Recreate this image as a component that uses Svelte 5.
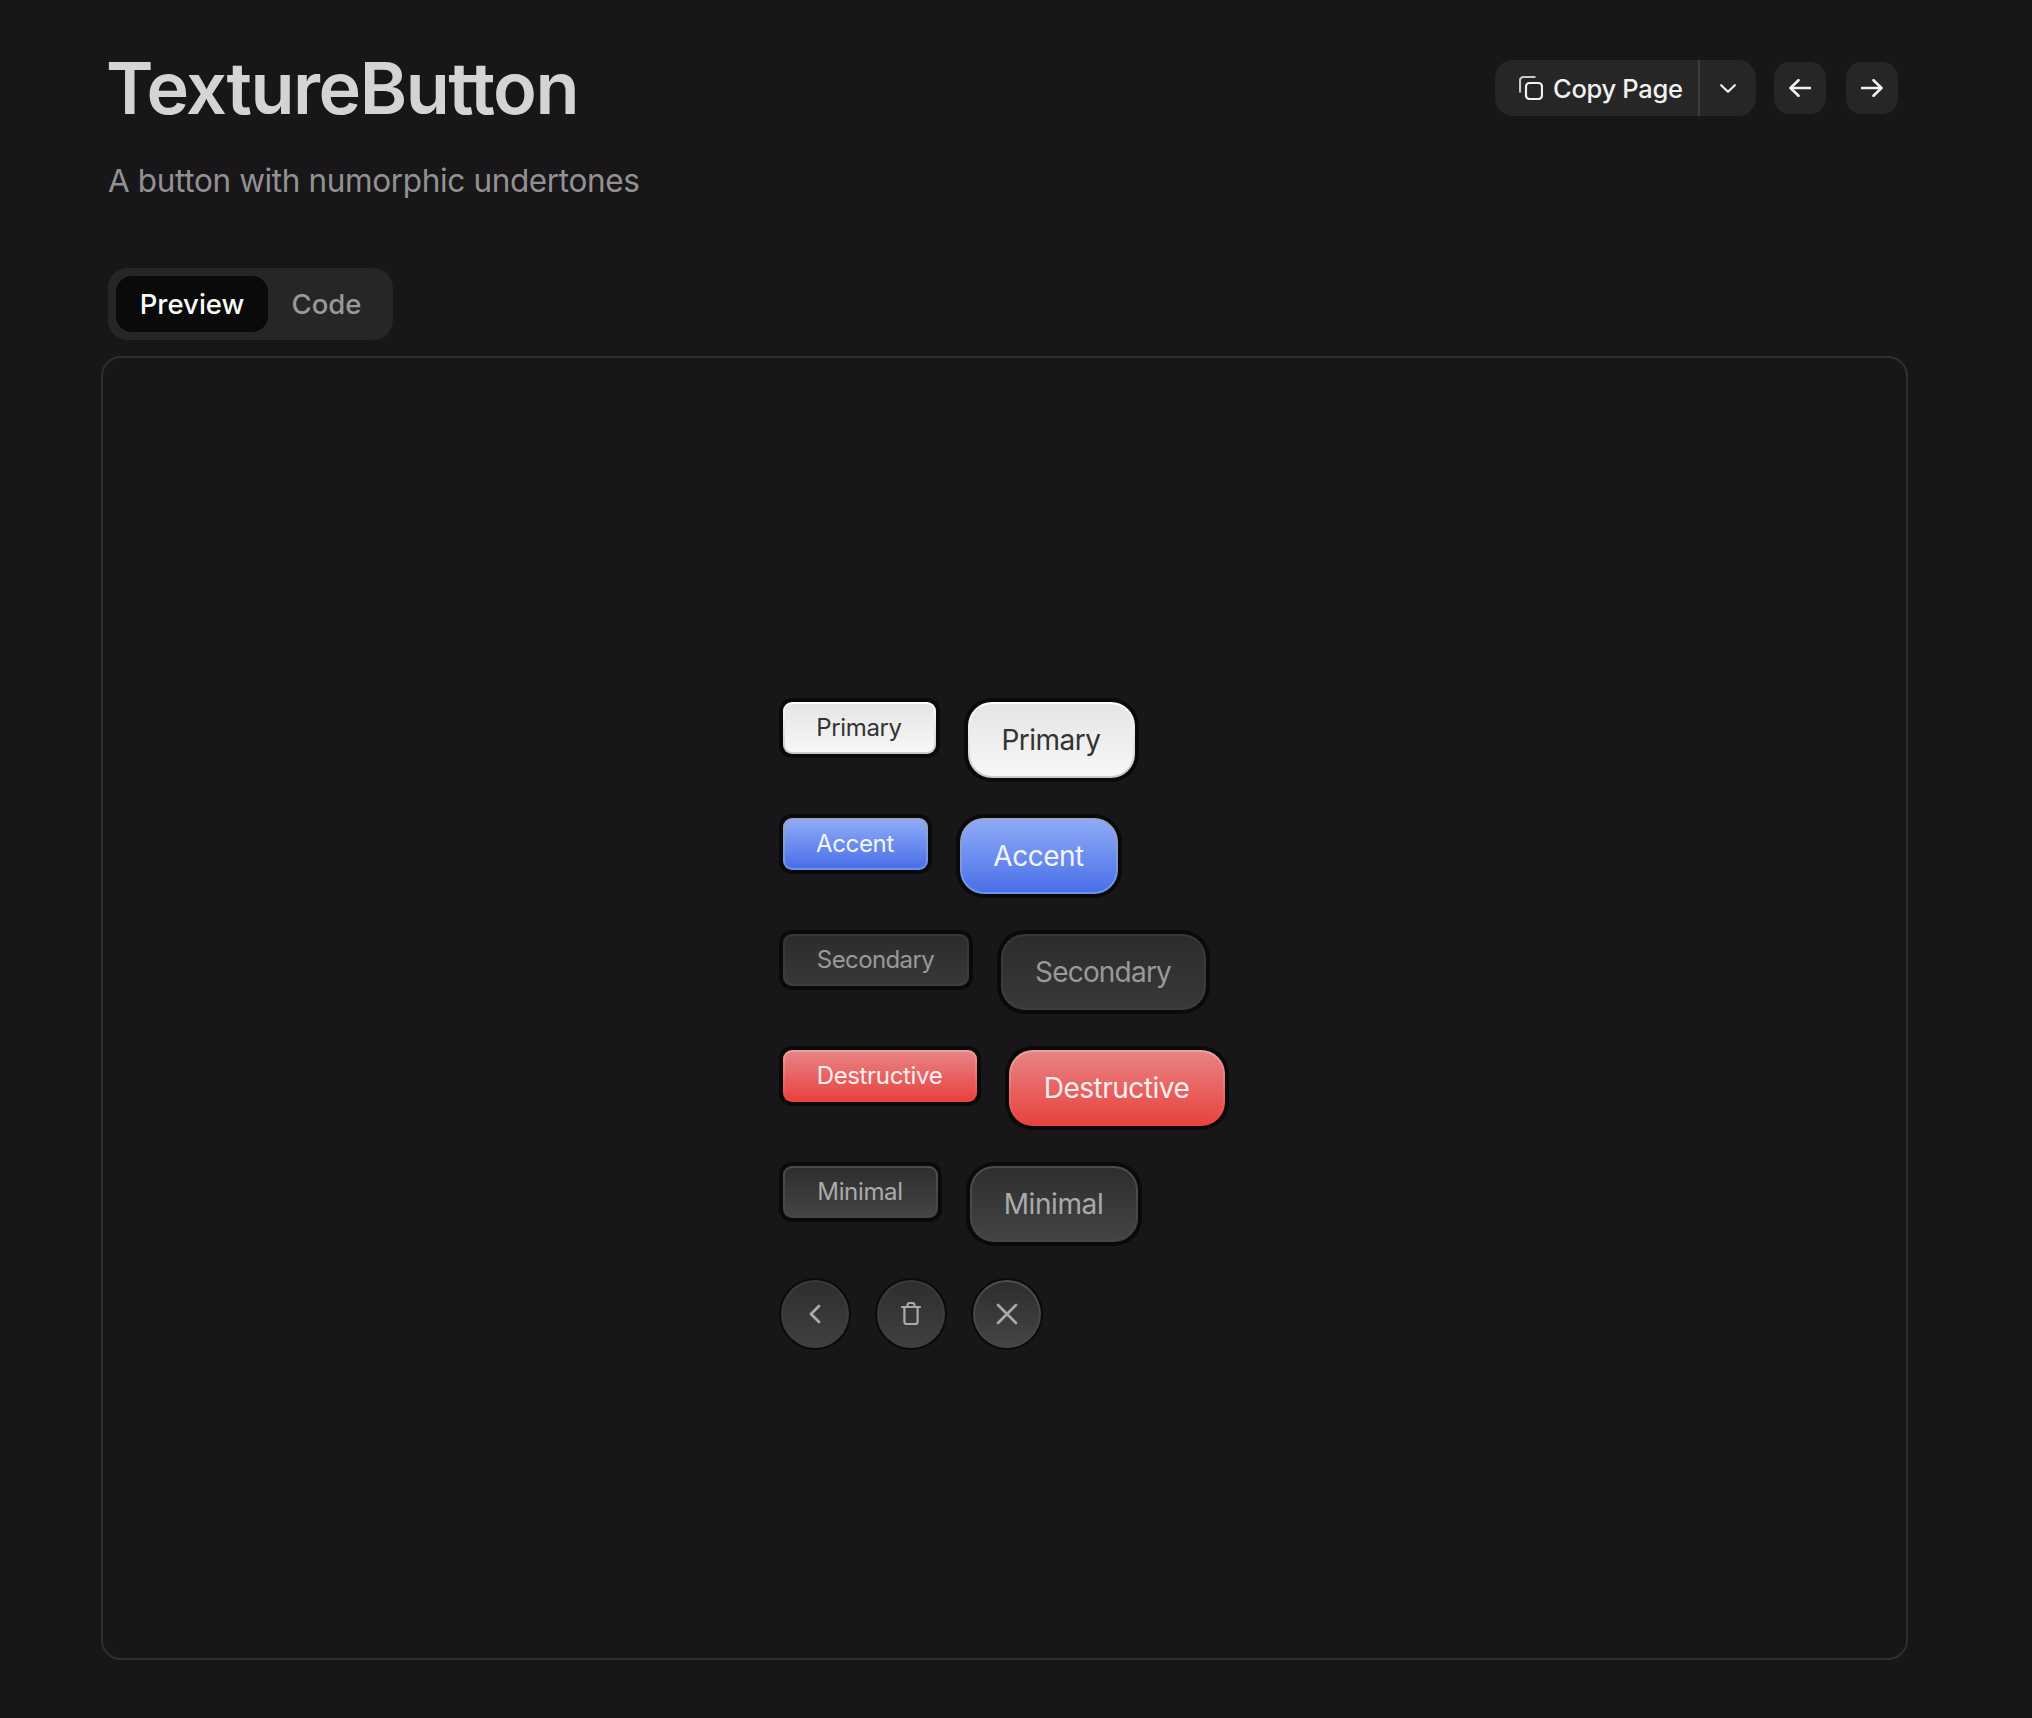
<script>
  const variants = ['primary', 'accent', 'secondary', 'destructive', 'minimal']
  const labels = {
    primary: 'Primary',
    accent: 'Accent',
    secondary: 'Secondary',
    destructive: 'Destructive',
    minimal: 'Minimal'
  }
</script>

<div class="page">
  <header class="head">
    <div class="titles">
      <h1>TextureButton</h1>
      <p>A button with numorphic undertones</p>
    </div>
    <div class="actions">
      <div class="copy-group">
        <button class="copy">
          <svg width="24" height="24" viewBox="0 0 24 24" fill="none" stroke="currentColor" stroke-width="2.2">
            <rect x="7" y="7" width="16" height="16" rx="3.5" />
            <path d="M16.5 1H4.5A3.5 3.5 0 0 0 1 4.5V16.5" stroke-opacity=".8" />
          </svg>
          Copy Page
        </button>
        <button class="caret" aria-label="More">
          <svg width="16" height="9" viewBox="0 0 16 9" fill="none" stroke="currentColor" stroke-width="2.2" stroke-linecap="round" stroke-linejoin="round">
            <path d="M1.2 1.2 8 7.8l6.8-6.6" />
          </svg>
        </button>
      </div>
      <button class="nav" aria-label="Previous">
        <svg width="22" height="18" viewBox="0 0 22 18" fill="none" stroke="currentColor" stroke-width="2.6" stroke-linecap="round" stroke-linejoin="round">
          <path d="M21 9H1.5M9.500 1.200 1.500 9l8 7.800" />
        </svg>
      </button>
      <button class="nav" aria-label="Next">
        <svg width="22" height="18" viewBox="0 0 22 18" fill="none" stroke="currentColor" stroke-width="2.6" stroke-linecap="round" stroke-linejoin="round">
          <path d="M1 9h19.5M12.500 1.200l8 7.800-8 7.800" />
        </svg>
      </button>
    </div>
  </header>

  <div class="tabs">
    <button class="tab active">Preview</button>
    <button class="tab">Code</button>
  </div>

  <section class="preview">
    <div class="stack">
      {#each variants as v}
        <div class="row">
          <button class="tb sm {v}"><span class="edge"><span class="face">{labels[v]}</span></span></button>
          <button class="tb lg {v}"><span class="edge"><span class="face">{labels[v]}</span></span></button>
        </div>
      {/each}
      <div class="row icons">
        <button class="tb round soft minimal" aria-label="Back">
          <span class="edge"><span class="face">
            <svg width="14" height="20" viewBox="0 0 14 20" fill="none" stroke="currentColor" stroke-width="2.8" stroke-linecap="round" stroke-linejoin="round">
              <path d="M11 2 3 10l8 8" />
            </svg>
          </span></span>
        </button>
        <button class="tb round soft minimal" aria-label="Delete">
          <span class="edge"><span class="face">
            <svg width="20" height="23" viewBox="0 0 20 23" fill="none" stroke="currentColor" stroke-width="2.2" stroke-linecap="round" stroke-linejoin="round">
              <path d="M1 5h18M3.4 5v14.4A2.6 2.6 0 0 0 6 22h8a2.6 2.6 0 0 0 2.6-2.6V5M6.5 5V3.2A2.2 2.2 0 0 1 8.700 1h2.600a2.200 2.200 0 0 1 2.200 2.200V5" />
            </svg>
          </span></span>
        </button>
        <button class="tb round minimal" aria-label="Close">
          <span class="edge"><span class="face">
            <svg width="22" height="22" viewBox="0 0 22 22" fill="none" stroke="currentColor" stroke-width="2.6" stroke-linecap="round" stroke-linejoin="round">
              <path d="M2 2l18 18M20 2 2 20" />
            </svg>
          </span></span>
        </button>
      </div>
    </div>
  </section>
</div>

<style>
  :global(body) {
    background: #181619;
    font-family: Inter, "Liberation Sans", sans-serif;
  }
  button {
    font-family: inherit;
    border: none;
    padding: 0;
    cursor: pointer;
  }

  .page {
    box-sizing: border-box;
    width: 1790px;
    height: 1718px;
    margin-left: 108px;
    padding-top: 49px;
  }

  .head {
    display: flex;
    justify-content: space-between;
    align-items: flex-start;
  }
  h1 {
    margin: 0 0 0 -2px;
    font-size: 72px;
    line-height: 78px;
    font-weight: 600;
    letter-spacing: -1.5px;
    color: #d4d4d4;
  }
  .titles p {
    margin: 32px 0 0;
    font-size: 31.5px;
    line-height: 44px;
    letter-spacing: -0.36px;
    color: #929292;
  }

  .actions {
    display: flex;
    align-items: center;
    gap: 20px;
    margin-top: 11px;
  }
  .copy-group {
    display: flex;
    height: 56px;
    margin-right: -2px;
    border-radius: 18px;
    background: #262626;
    overflow: hidden;
  }
  .copy {
    display: flex;
    align-items: center;
    gap: 10px;
    width: 205px;
    padding-left: 24px;
    border-right: 2px solid #3d3d3d;
    background: none;
    color: #f1f1f1;
    font-size: 25.5px;
    font-weight: 450;
    letter-spacing: -0.3px;
  }
  .caret {
    display: flex;
    align-items: center;
    justify-content: center;
    width: 56px;
    background: none;
    color: #f1f1f1;
  }
  .nav {
    display: flex;
    align-items: center;
    justify-content: center;
    width: 52px;
    height: 52px;
    border-radius: 16px;
    background: #262626;
    color: #f1f1f1;
  }

  .tabs {
    display: flex;
    width: max-content;
    height: 72px;
    box-sizing: border-box;
    margin-top: 65px;
    padding: 8px;
    border-radius: 20px;
    background: #262626;
  }
  .tab {
    width: 152px;
    height: 56px;
    border-radius: 16px;
    background: none;
    color: #999;
    font-size: 27.5px;
    font-weight: 450;
  }
  .tab:not(.active) {
    width: 117px;
  }
  .tab.active {
    background: #0a0a0a;
    color: #fafafa;
  }

  .preview {
    box-sizing: border-box;
    display: flex;
    align-items: center;
    justify-content: center;
    height: 1304px;
    margin: 16px -10px 0 -7px;
    padding: 31px 2px 0 0;
    border: 2px solid #2f2f32;
    border-radius: 20px;
  }
  .stack {
    display: flex;
    flex-direction: column;
    gap: 32px;
    width: 450px;
  }
  .row {
    display: flex;
    align-items: flex-start;
    gap: 24px;
  }

  .tb {
    display: block;
    padding: 4px;
    background: #0a0a0a;
  }
  .edge {
    display: block;
    padding: 2px;
  }
  .face {
    display: flex;
    align-items: center;
    justify-content: center;
    box-sizing: border-box;
    white-space: nowrap;
  }

  .sm { border-radius: 13px; }
  .sm .edge { border-radius: 9px; }
  .sm .face {
    height: 48px;
    border-radius: 7px;
    font-size: 24px;
    letter-spacing: -0.35px;
  }
  .lg { border-radius: 28px; }
  .lg .edge { border-radius: 24px; }
  .lg .face {
    height: 72px;
    border-radius: 22px;
    font-size: 28px;
    letter-spacing: -0.5px;
  }
  .round {
    padding: 2px;
    border-radius: 50%;
  }
  .round .edge { border-radius: 50%; }
  .round .face {
    width: 64px;
    height: 64px;
    border-radius: 50%;
  }

  .sm.primary .face { width: 149px; }
  .sm.accent .face { width: 141px; }
  .sm.secondary .face { width: 182px; letter-spacing: -0.6px; }
  .sm.destructive .face { width: 190px; }
  .sm.minimal .face { width: 151px; }
  .lg.primary .face { width: 163px; }
  .lg.accent .face { width: 154px; }
  .lg.secondary .face { width: 201px; letter-spacing: -0.8px; }
  .lg.destructive .face { width: 212px; }
  .lg.minimal .face { width: 164px; letter-spacing: -0.4px; }

  .primary .edge { background: linear-gradient(#fff, #c9c9c9); }
  .primary .face {
    background: linear-gradient(#e5e5e5, #f7f7f7);
    color: #333;
  }
  .accent .edge { background: linear-gradient(#9aa6c4, #6f90ee); }
  .accent .face {
    background: linear-gradient(#8fabf7, #4a6fe8);
    color: #f2f5ff;
  }
  .secondary .edge { background: linear-gradient(#363636, #3e3e3e); }
  .secondary .face {
    background: linear-gradient(#2c2c2c, #383838);
    color: #999;
  }
  .destructive .edge { background: linear-gradient(#eba3a3, #e84340); }
  .destructive .face {
    background: linear-gradient(#e88383, #e84340);
    color: #fdf0f0;
  }
  .minimal .edge { background: linear-gradient(#4c4c4c, #454545); }
  .minimal .face {
    background: linear-gradient(#2e2e2e, #444);
    color: #aaa;
  }
  .soft.minimal .edge { background: linear-gradient(#3a3a3a, #3f3f3f); }
  .soft.minimal .face { background: linear-gradient(#2e2e2e, #404040); }
</style>
